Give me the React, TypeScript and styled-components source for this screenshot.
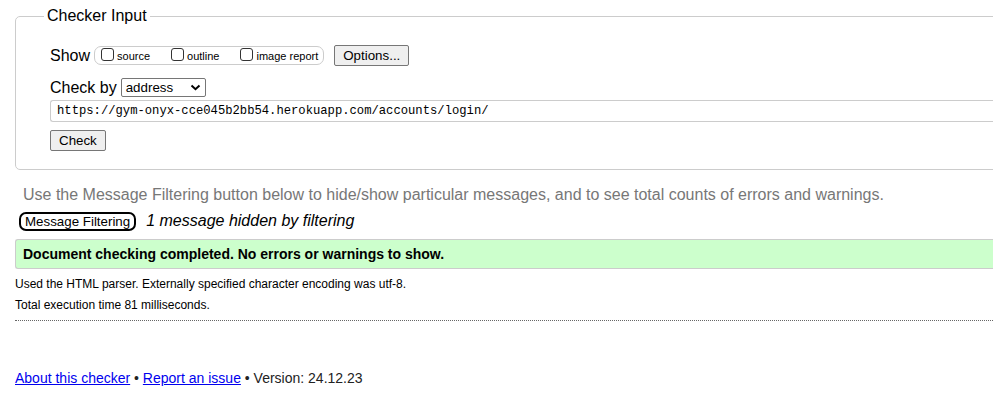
import React from "react";
import styled, { createGlobalStyle } from "styled-components";

const Global = createGlobalStyle`
  html, body { margin: 0; padding: 0; background: #fff; overflow: hidden; }
  body { font-family: "Liberation Sans", Arial, sans-serif; color: #000; }
`;

const Page = styled.div`
  width: 1200px;
  padding: 0 0 0 15px;
`;

const Fieldset = styled.fieldset`
  margin: 7px 0 0 0;
  padding: 20px 0 18px 34px;
  border: 1px solid #ccc;
  border-radius: 5px;
  min-width: 0;
`;

const Legend = styled.legend`
  font-size: 16px;
  padding: 0 3px;
  margin-left: -6px;
  color: #000;
`;

const Row = styled.div<{ $mt?: number }>`
  display: flex;
  align-items: center;
  margin-top: ${(p) => p.$mt ?? 0}px;
  font-size: 16px;
`;

const Label = styled.span`
  font-size: 16px;
  margin-right: 4px;
`;

const CheckGroup = styled.span`
  display: inline-flex;
  align-items: center;
  height: 17px;
  border: 1px solid #ccc;
  border-radius: 7px;
  padding: 0 5px 0 6px;
`;

const Box = styled.span`
  display: inline-block;
  width: 11px;
  height: 11px;
  border: 1px solid #333;
  border-radius: 3px;
  margin-right: 3px;
  margin-top: -2px;
`;

const CheckLabel = styled.label<{ $mr?: number }>`
  display: inline-flex;
  align-items: center;
  font-size: 11px;
  margin-right: ${(p) => p.$mr ?? 0}px;
`;

const Button = styled.button<{ $ml?: number }>`
  font-family: "Liberation Sans", Arial, sans-serif;
  font-size: 13.33px;
  background: #efefef;
  border: 1px solid #767676;
  border-radius: 2px;
  padding: 1px 8px;
  height: 21px;
  margin-left: ${(p) => p.$ml ?? 0}px;
  color: #000;
`;

const Select = styled.span`
  display: inline-flex;
  align-items: center;
  justify-content: space-between;
  box-sizing: border-box;
  width: 85px;
  height: 19px;
  border: 1px solid #767676;
  border-radius: 2px;
  padding: 0 4px 0 4px;
  font-size: 13.33px;
  background: #fff;
`;

const UrlInput = styled.div`
  box-sizing: border-box;
  height: 22px;
  margin-top: 3px;
  border: 1px solid #ccc;
  border-right: none;
  border-radius: 3px 0 0 3px;
  padding: 0 0 0 6px;
  display: flex;
  align-items: center;
  font-family: "Liberation Mono", "DejaVu Sans Mono", monospace;
  font-size: 12.2px;
`;

const Hint = styled.p`
  margin: 16px 0 0 8px;
  font-size: 16px;
  color: #777;
  line-height: 18px;
`;

const FilterRow = styled.div`
  display: flex;
  align-items: center;
  margin: 7px 0 0 4px;
  height: 20px;
`;

const FilterButton = styled.button`
  font-family: "Liberation Sans", Arial, sans-serif;
  font-size: 13.33px;
  background: #fff;
  border: 2px solid #000;
  border-radius: 7px;
  padding: 0 4px;
  height: 19px;
  color: #000;
`;

const HiddenNote = styled.em`
  font-size: 16px;
  margin-left: 10px;
`;

const Success = styled.div`
  margin-top: 8px;
  box-sizing: border-box;
  height: 30px;
  background: #ccffcc;
  border: 1px solid #ccc;
  border-right: none;
  border-radius: 3px 0 0 3px;
  padding-left: 7px;
  display: flex;
  align-items: center;
  font-size: 14px;
  font-weight: bold;
`;

const Detail = styled.p<{ $mt: number }>`
  margin: ${(p) => p.$mt}px 0 0 0;
  font-size: 12px;
  line-height: 14px;
`;

const Divider = styled.hr`
  margin: 8px 0 0 0;
  border: none;
  border-top: 1px dotted #666;
  height: 0;
`;

const Footer = styled.p`
  margin: 49px 0 0 0;
  font-size: 14px;
  line-height: 16px;
  color: #222;
`;

const Link = styled.a`
  color: #00e;
  text-decoration: underline;
`;

export default function App() {
  return (
    <>
      <Global />
      <Page>
        <Fieldset>
          <Legend>Checker Input</Legend>
          <Row>
            <Label>Show</Label>
            <CheckGroup>
              <CheckLabel $mr={21}>
                <Box />
                source
              </CheckLabel>
              <CheckLabel $mr={21}>
                <Box />
                outline
              </CheckLabel>
              <CheckLabel>
                <Box />
                image report
              </CheckLabel>
            </CheckGroup>
            <Button $ml={10}>Options...</Button>
          </Row>
          <Row $mt={12}>
            <Label>Check by</Label>
            <Select>
              address
              <svg width="11" height="7" viewBox="0 0 11 7">
                <path d="M1.5 1.5 L5.5 5.2 L9.5 1.5" fill="none" stroke="#000" strokeWidth="2" />
              </svg>
            </Select>
          </Row>
          <UrlInput>https://gym-onyx-cce045b2bb54.herokuapp.com/accounts/login/</UrlInput>
          <Row $mt={8}>
            <Button>Check</Button>
          </Row>
        </Fieldset>
        <Hint>
          Use the Message Filtering button below to hide/show particular messages, and to see total counts of errors and warnings.
        </Hint>
        <FilterRow>
          <FilterButton>Message Filtering</FilterButton>
          <HiddenNote>1 message hidden by filtering</HiddenNote>
        </FilterRow>
        <Success>Document checking completed. No errors or warnings to show.</Success>
        <Detail $mt={8}>Used the HTML parser. Externally specified character encoding was utf-8.</Detail>
        <Detail $mt={7}>Total execution time 81 milliseconds.</Detail>
        <Divider />
        <Footer>
          <Link href="#">About this checker</Link> • <Link href="#">Report an issue</Link> • Version: 24.12.23
        </Footer>
      </Page>
    </>
  );
}
